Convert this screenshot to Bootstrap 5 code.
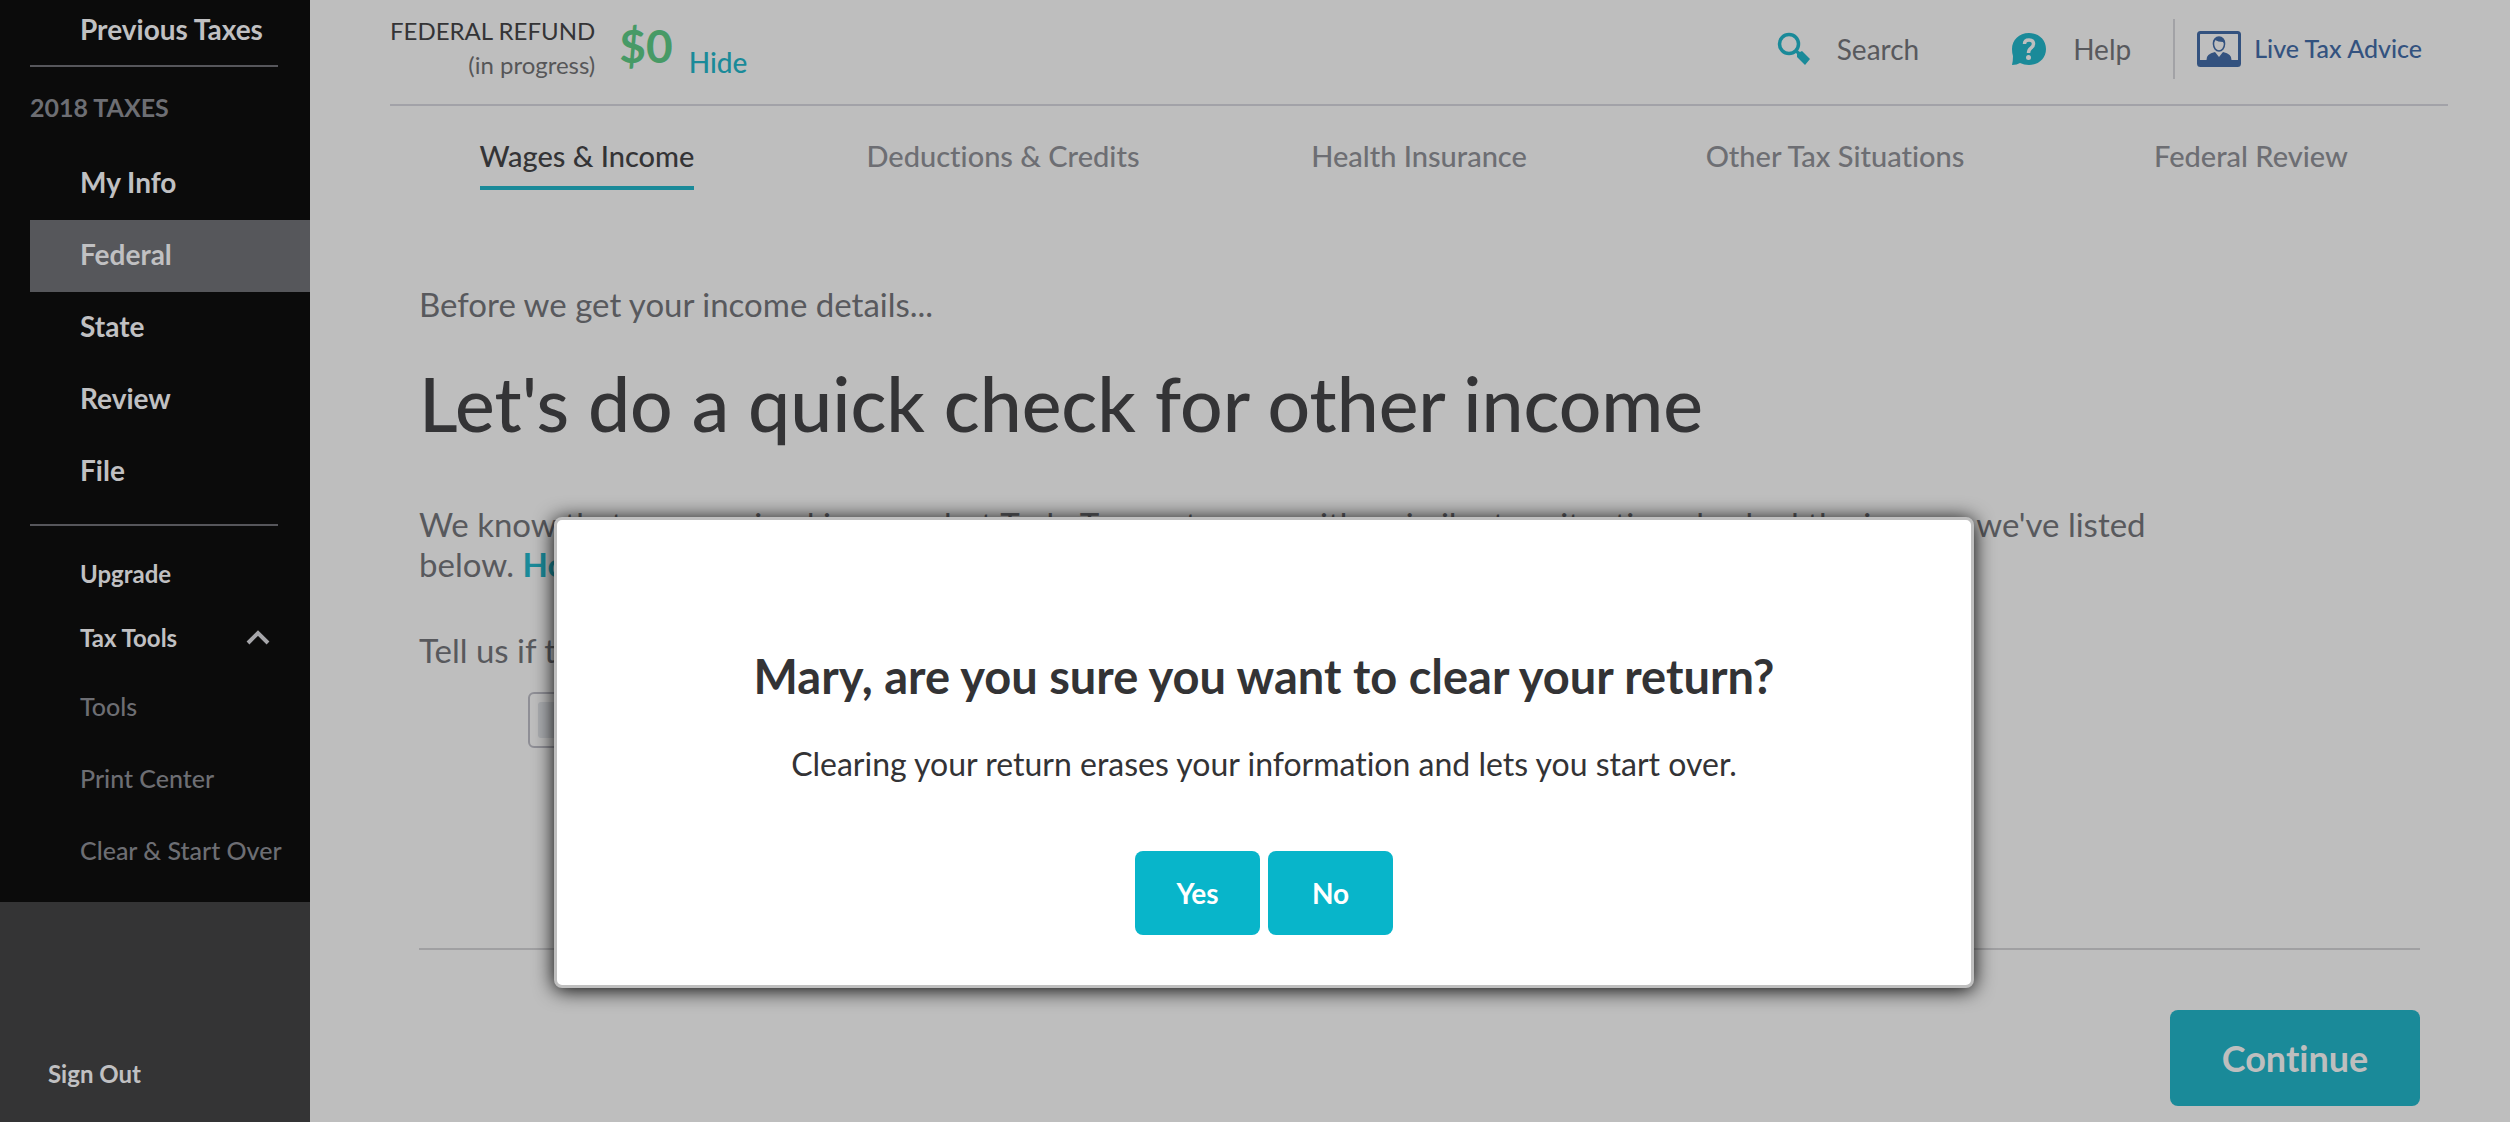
<!DOCTYPE html>
<html lang="en">
<head>
<meta charset="utf-8">
<meta name="viewport" content="width=device-width, initial-scale=1">
<title>Federal - Wages &amp; Income</title>
<link href="https://cdn.jsdelivr.net/npm/bootstrap@5.3.0/dist/css/bootstrap.min.css" rel="stylesheet">
<style>
  body { font-family: Lato, sans-serif; background: #bebebe; color: #58595d; }
  body, button { font-variant-ligatures: none; }
  a { text-decoration: none; }
  .app-shell { height: 100vh; overflow: hidden; }
  .side { width: 310px; background: #343435; font-size: 28px; line-height: 40px; }
  .side-top { background: #0b0b0b; padding: 9px 0 16px; }
  .side a, .side button { color: #c0c0c2; font-weight: 700; padding: 0 30px 0 80px; }
  .side-rule { border-top: 2px solid #56565b; margin: 0 32px 0 30px; }
  .side-label { color: #6d6e73; font-size: 25px; font-weight: 700; padding-left: 30px; margin: 20px 0 21px; }
  .side .side-main { line-height: 68px; padding-bottom: 4px; }
  .side .side-on { background: #56575b; margin-left: 30px; padding-left: 50px; }
  .side .side-mid { font-size: 24px; line-height: 64px; }
  .side .side-sub { font-size: 25px; font-weight: 500; line-height: 72px; color: #6d6e73; white-space: nowrap; padding-right: 0; }
  .side .side-out { font-size: 24px; padding: 0 0 28px 48px; }
  .side button { background: none; border: 0; }
  .page { padding: 0 62px 0 80px; }
  .top-bar { height: 106px; border-bottom: 2px solid #a2a2a8; padding-right: 26px; }
  .refund { font-size: 24px; line-height: 34px; color: #343436; }
  .refund-amt { font-size: 46px; font-weight: 700; color: #479a66; line-height: 64px; }
  .teal { color: #1a8a99; }
  .hide-link { font-size: 28px; font-weight: 500; line-height: 40px; padding-top: 28px; }
  .refund-box { padding-top: 14px; }
  .tools-box { padding-top: 19px; }
  .top-link { font-size: 28px; color: #58595d; gap: 26px; }
  .search-link { margin-right: 92px; }
  .help-link { margin-right: 42px; }
  .live { border-left: 2px solid #a2a2a6; height: 60px; color: #33527f; font-size: 25px; font-weight: 500; padding-left: 22px; gap: 13px; }
  .tabs-row { margin: 0 -11px; padding-top: 30px; font-size: 29px; font-weight: 500; line-height: 40px; }
  .tab-cell { flex: 1 1 0; text-align: center; }
  .tab-cell a { display: inline-block; color: #6d6e73; padding-bottom: 10px; border-bottom: 4px solid transparent; }
  .tab-cell .tab-on { color: #343436; border-color: #1a8a99; }
  .content { padding: 94px 28px 0 29px; font-size: 33px; line-height: 40px; }
  .content h1 { font-size: 75px; line-height: 92px; font-weight: 500; color: #343436; margin: 33px 0 55px; }
  .intro { max-width: 1780px; margin-bottom: 46px; }
  .choice { margin: 22px 0 0 109px; width: 420px; height: 56px; border: 2px solid #8f8f96; border-radius: 6px; padding: 0 8px; }
  .choice input { appearance: none; width: 36px; height: 36px; background: #abadb0; border-radius: 3px; }
  .foot { border-top: 2px solid #a0a0a2; margin-top: 200px; padding-top: 60px; }
  .go { background: #1a8a99; color: #bebebe; font-size: 36px; font-weight: 700; width: 250px; height: 96px; border-radius: 8px; border: 0; }
  .ask { width: 1420px; left: 554px; top: 517px; z-index: 10; background: #fff; border: 3px solid #bfbfbf; border-radius: 8px; box-shadow: 0 2px 20px #000; padding: 128px 40px 50px; color: #333335; }
  .ask h2 { font-size: 47px; line-height: 56px; font-weight: 700; margin-bottom: 40px; }
  .ask p { font-size: 32px; line-height: 40px; margin-bottom: 67px; }
  .ask button { background: #08b5ca; color: #fff; font-size: 28px; font-weight: 700; width: 125px; height: 84px; border: 0; border-radius: 8px; }
</style>
<script src="https://cdn.jsdelivr.net/npm/bootstrap@5.3.0/dist/js/bootstrap.bundle.min.js"></script>
</head>
<body>
<div class="app-shell d-flex">
  <nav class="side d-flex flex-column flex-shrink-0" aria-label="Main">
    <div class="side-top d-flex flex-column">
      <a href="#">Previous Taxes</a>
      <div class="side-rule mt-3"></div>
      <div class="side-label">2018 TAXES</div>
      <a class="side-main" href="#">My Info</a>
      <a class="side-main side-on" href="#">Federal</a>
      <a class="side-main" href="#">State</a>
      <a class="side-main" href="#">Review</a>
      <a class="side-main" href="#">File</a>
      <div class="side-rule mt-3 mb-3"></div>
      <a class="side-mid" href="#">Upgrade</a>
      <button class="side-mid d-flex justify-content-between align-items-center" type="button">Tax Tools
        <svg width="44" height="24" viewBox="0 0 44 24" fill="none" stroke="#a6a6aa" stroke-width="4"><path d="M12 17 22 7l10 10"/></svg>
      </button>
      <a class="side-sub" href="#">Tools</a>
      <a class="side-sub" href="#">Print Center</a>
      <a class="side-sub" href="#">Clear &amp; Start Over</a>
    </div>
    <a class="side-out mt-auto" href="#">Sign Out</a>
  </nav>

  <main class="page flex-grow-1">
    <header class="top-bar d-flex align-items-start justify-content-between">
      <div class="refund-box d-flex">
        <div class="refund text-end">FEDERAL REFUND<br><span class="text-reset opacity-75">(in progress)</span></div>
        <div class="refund-amt ms-4">$0</div>
        <a class="hide-link teal ms-3" href="#">Hide</a>
      </div>
      <div class="tools-box d-flex align-items-center">
        <a class="top-link search-link d-flex align-items-center" href="#">
          <svg width="34" height="34" viewBox="0 0 34 34"><circle cx="12" cy="12" r="9.500" fill="none" stroke="#1a8a99" stroke-width="3.500"/><path d="m18 20 2-2 3 2 2-1 8 8-5 6-8-8v-3z" fill="#1a8a99"/></svg>Search</a>
        <a class="top-link help-link d-flex align-items-center" href="#">
          <svg width="36" height="34" viewBox="0 0 36 34"><path d="M18 1c10 0 17 7 17 16s-7 16-17 16q-5 0-9-2-3 2-8 2 1-4 1-9-1-3-1-7C1 8 8 1 18 1z" fill="#1a8a99"/><path d="M13.500 12q0-4 4.500-4t4.500 4q0 2-2.500 4t-2.500 5" fill="none" stroke="#bebebe" stroke-width="3.500"/><circle cx="17.500" cy="25.500" r="2.500" fill="#bebebe"/></svg>Help</a>
        <a class="live d-flex align-items-center" href="#">
          <svg width="44" height="36" viewBox="0 0 44 36"><rect x="1.500" y="1.500" width="41" height="33" rx="2" fill="none" stroke="#33527f" stroke-width="3"/><path d="M2 29h7.500q-.5-6 8.500-8l4 5 4-5q9 2 8.500 8H42v6H2z" fill="#33527f"/><ellipse cx="22" cy="13" rx="5.500" ry="7" fill="none" stroke="#33527f" stroke-width="1.500"/><path d="M16 14q-1-8 6-8t6 8l-2-3q-5 0-8-2z" fill="#33527f"/></svg>Live Tax Advice</a>
      </div>
    </header>
    <nav class="tabs-row d-flex" aria-label="Federal sections">
      <div class="tab-cell"><a class="tab-on" href="#">Wages &amp; Income</a></div>
      <div class="tab-cell"><a href="#">Deductions &amp; Credits</a></div>
      <div class="tab-cell"><a href="#">Health Insurance</a></div>
      <div class="tab-cell"><a href="#">Other Tax Situations</a></div>
      <div class="tab-cell"><a href="#">Federal Review</a></div>
    </nav>
    <section class="content">
      <div>Before we get your income details...</div>
      <h1>Let's do a quick check for other income</h1>
      <p class="intro">We know that you received income, but TurboTax customers with a similar tax situation also had the income we've listed below. <a class="teal fw-bold" href="#">How do we know?</a></p>
      <div>Tell us if this applies to you:</div>
      <label class="choice d-flex align-items-center"><input type="checkbox" aria-label="Other income"></label>
      <div class="foot text-end"><button class="go" type="button">Continue</button></div>
    </section>
  </main>
</div>

<div class="ask position-absolute text-center" role="dialog" aria-modal="true" aria-labelledby="askTitle">
  <h2 id="askTitle">Mary, are you sure you want to clear your return?</h2>
  <p>Clearing your return erases your information and lets you start over.</p>
  <div class="d-flex justify-content-center gap-2">
    <button type="button">Yes</button>
    <button type="button">No</button>
  </div>
</div>
</body>
</html>
